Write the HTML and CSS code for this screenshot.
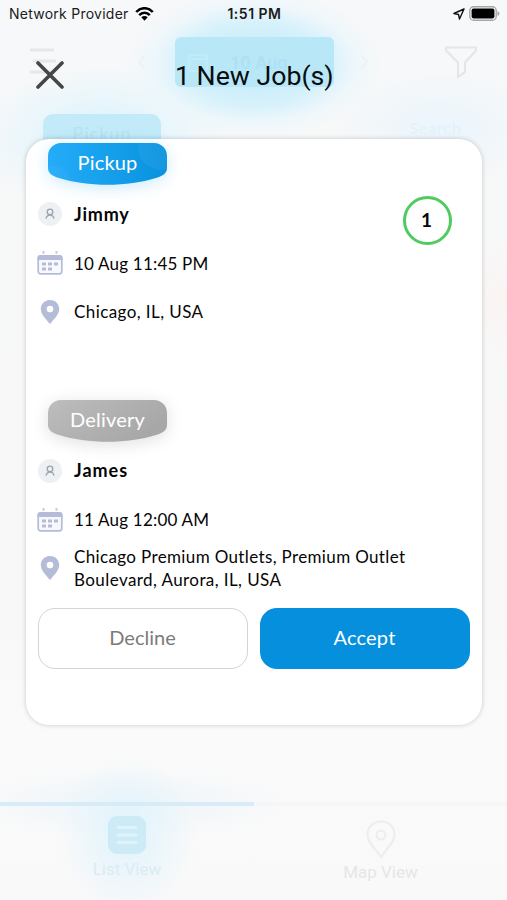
FILE: index.html
```html
<!DOCTYPE html>
<html lang="en">
<head>
<meta charset="utf-8">
<title>New Jobs</title>
<link rel="stylesheet" href="styles.css">
</head>
<body>
<svg class="defs" aria-hidden="true">
  <symbol id="person" viewBox="0 0 24 24"><circle cx="12" cy="12" r="12" fill="#edf1f4" stroke="none"/><circle cx="12" cy="9.900" r="2.800"/><path d="M8 16.700c.5-2.500 2-3.500 4-3.500s3.500 1 4 3.500"/></symbol>
  <symbol id="calendar" viewBox="0 0 26 24"><path d="M6.500 0v2.800M19.500 0v2.800" stroke="#c3cae0" stroke-width="2"/><rect x="1.200" y="5" width="23.600" height="17.800" rx="2.500" fill="#f8f9fc" stroke="#b4bcd8" stroke-width="1.700"/><path d="M.5 9V6.500A2.500 2.500 0 0 1 3 4h20a2.500 2.500 0 0 1 2.500 2.500V9z" fill="#b4bcd8"/><path d="M5 13h4m2 0h4m2 0h4M5 18h4m2 0h4" stroke="#b4bcd8" stroke-width="2.800"/></symbol>
  <symbol id="pin" viewBox="0 0 20 24"><path fill-rule="evenodd" d="M10 0C4.500 0 .8 4 .8 9 .8 14.500 6 19 10 24c4-5 9.200-9.500 9.200-15C19.200 4 15.500 0 10 0zm0 5.800a3.300 3.300 0 1 1 0 6.600 3.300 3.300 0 0 1 0-6.600z" fill="#b4bcd8"/></symbol>
</svg>
<div class="screen">
  <div class="backdrop" aria-hidden="true">
    <div class="back-head">
      <svg class="back-menu" viewBox="0 0 28 28"><path d="M1 2h24M4 13h23M1 24h22"/></svg>
      <svg class="back-arrow" viewBox="0 0 10 16"><path d="M8 1 2 8l6 7"/></svg>
      <div class="back-date"><svg viewBox="0 0 20 20"><rect x="1" y="3" width="18" height="16" rx="3"/><path d="M1 7h18"/></svg><span>10 Aug</span></div>
      <svg class="back-arrow" viewBox="0 0 10 16"><path d="m2 1 6 7-6 7"/></svg>
      <svg class="back-filter" viewBox="0 0 34 34"><path d="M2 2.500h30v3L21 17.500v9.500l-7 5V17.500L2 5.500z"/></svg>
    </div>
    <div class="back-tabs"><div class="back-pickup">Pickup</div><div class="back-search">Search</div></div>
    <div class="back-body"></div>
    <div class="back-nav">
      <div class="nav-item current">
        <svg viewBox="0 0 38 38"><rect width="38" height="38" rx="9" fill="#cdebf7"/><path d="M10 11.500h18M10 19h18M10 26.500h18" stroke="#e0f3fb" stroke-width="3" stroke-linecap="round"/></svg>
        <span>List View</span>
      </div>
      <div class="nav-item">
        <svg viewBox="0 0 38 38"><path d="M19 1.500C11 1.500 5.500 7 5.500 14.500 5.500 23 14 29 19 37c5-8 13.500-14 13.500-22.500C32.500 7 27 1.500 19 1.500z" /><circle cx="19" cy="15" r="4.500"/></svg>
        <span>Map View</span>
      </div>
    </div>
  </div>

  <div class="front">
    <div class="status">
      <div class="carrier"><span>Network Provider</span>
        <svg width="19" height="14" viewBox="0 0 19 14"><path d="M1.200 5C6-.1 13-.1 17.800 5M4.200 8.200c3-3.200 7.600-3.200 10.600 0" fill="none" stroke="#000" stroke-width="2.500"/><path d="m6.300 10.200 3.200 3.500 3.200-3.500c-1.800-1.700-4.600-1.700-6.400 0z"/></svg>
      </div>
      <span class="clock">1:51 PM</span>
      <div class="power">
        <svg width="12" height="12" viewBox="0 0 12 12"><path d="M11 1 .9 5.500l4.600 1L6.500 11z" fill="none" stroke="#111" stroke-width="1.400" stroke-linejoin="round"/></svg>
        <svg width="31" height="15" viewBox="0 0 31 15"><rect x=".8" y=".8" width="26.400" height="13.400" rx="3.800" fill="none" stroke="#a6a6a6" stroke-width="1.400"/><rect x="2.600" y="2.600" width="22.800" height="9.800" rx="1.800"/><path d="M28.500 5v5q2-1 2-2.500t-2-2.500z" fill="#a6a6a6"/></svg>
      </div>
    </div>
    <div class="titlebar">
      <svg class="close" viewBox="0 0 28 28"><path d="m2 2 24 24M26 2 2 26"/></svg>
      <h1>1 New Job(s)</h1>
    </div>
    <main class="card">
      <section class="stop">
        <div class="badge pickup"><svg viewBox="0 0 119 42"><defs><linearGradient id="blue"><stop stop-color="#24acf8"/><stop offset="1" stop-color="#0892de"/></linearGradient><clipPath id="tag"><path d="M13 0h93a13 13 0 0 1 13 13v12c0 5-4 8-11 10C80 44 39 44 11 35 4 33 0 30 0 25V13A13 13 0 0 1 13 0z"/></clipPath></defs><g clip-path="url(#tag)"><path fill="url(#blue)" d="M0 0h119v42H0z"/><circle cx="113" cy="4" r="23" fill="#fff" opacity=".05"/><circle cx="5" cy="41" r="18" fill="#fff" opacity=".04"/></g></svg><span>Pickup</span></div>
        <div class="row"><svg class="ic person"><use href="#person"/></svg><span class="name jimmy">Jimmy</span></div>
        <div class="row"><svg class="ic calendar"><use href="#calendar"/></svg><span class="when">10 Aug 11:45 PM</span></div>
        <div class="row"><svg class="ic pin"><use href="#pin"/></svg><span class="city">Chicago, IL, USA</span></div>
        <div class="count">1</div>
      </section>
      <section class="stop second">
        <div class="badge delivery"><svg viewBox="0 0 119 42"><defs><linearGradient id="grey" y2=".5"><stop stop-color="#bdbdbd"/><stop offset="1" stop-color="#a7a7a7"/></linearGradient></defs><path fill="url(#grey)" d="M13 0h93a13 13 0 0 1 13 13v12c0 5-4 8-11 10C80 44 39 44 11 35 4 33 0 30 0 25V13A13 13 0 0 1 13 0z"/></svg><span>Delivery</span></div>
        <div class="row"><svg class="ic person"><use href="#person"/></svg><span class="name james">James</span></div>
        <div class="row"><svg class="ic calendar"><use href="#calendar"/></svg><span class="when">11 Aug 12:00 AM</span></div>
        <div class="row"><svg class="ic pin"><use href="#pin"/></svg><span class="address">Chicago Premium Outlets, Premium Outlet<br><span class="line2">Boulevard, Aurora, IL, USA</span></span></div>
      </section>
      <div class="actions">
        <button class="btn decline">Decline</button>
        <button class="btn accept">Accept</button>
      </div>
    </main>
  </div>
</div>
</body>
</html>
```

FILE: styles.css
```css
* { box-sizing: border-box; }
body { margin: 0; font-family: Lato, "Liberation Sans", sans-serif; color: #050505; }
.defs { position: absolute; width: 0; height: 0; }
.screen { position: relative; width: 507px; height: 900px; overflow: hidden; background: #f9f9f9; }

.backdrop {
  position: absolute; inset: 0; display: flex; flex-direction: column; padding-top: 37px;
  background:
    radial-gradient(ellipse 130px 75px at 254px 64px, #bfeafa, #d6f1fb 55%, rgba(234,247,252,.6) 80%, rgba(246,250,252,0)),
    radial-gradient(ellipse 125px 75px at 102px 140px, #d6f0fb, #e9f6fb 55%, rgba(246,250,252,0)),
    radial-gradient(ellipse 110px 60px at 440px 128px, #eaf5fc, rgba(246,250,252,0)),
    radial-gradient(ellipse 50px 60px at 507px 300px, #faf4f2, rgba(249,247,247,0)),
    radial-gradient(ellipse 70px 80px at 127px 835px, #e0f3fc, rgba(249,251,252,0)),
    radial-gradient(ellipse 170px 35px at 127px 803px, #edf5fa, rgba(249,251,252,0)),
    linear-gradient(#f7f8f9, #f8f8f8 70%, #fafafa 80%, #f9f9f9);
}
.back-head { display: flex; align-items: center; height: 50px; padding: 0 29px 0 29px; }
.backdrop svg { fill: none; stroke: #e7ebed; stroke-width: 2; flex: none; }
.backdrop .back-menu { width: 28px; height: 28px; stroke: #e4e8ea; stroke-width: 3; margin-right: 80px; }
.backdrop .back-arrow { width: 10px; height: 16px; opacity: .4; }
.backdrop .back-filter { width: 34px; height: 34px; stroke: #e3e5e6; margin-left: auto; }
.back-date { width: 159px; height: 50px; margin: 0 25px 0 28px; border-radius: 6px; background: #b8e7f8; display: flex; align-items: center; padding-left: 13px; gap: 22px; font: 700 18px Roboto, sans-serif; color: #aee1f4; }
.backdrop .back-date svg { width: 20px; height: 20px; stroke: #c2ebfa; }
.back-tabs { display: flex; justify-content: space-between; margin: 27px 45px 0 43px; font-size: 18px; letter-spacing: 1px; }
.back-pickup { width: 118px; height: 42px; border-radius: 10px; background: #c2eaf9; color: #b3e2f4; text-align: center; line-height: 38px; }
.back-search { line-height: 28px; font-size: 16px; color: #e2f1fa; }
.back-body { flex: 1; }
.back-nav { display: grid; grid-template-columns: 254px 253px; height: 98px; }
.nav-item { display: flex; flex-direction: column; align-items: center; padding-top: 14px; border-top: 4px solid #f6f6f6; font: 17px/20px Roboto, sans-serif; color: #e6e6e6; gap: 4px; }
.nav-item svg { width: 38px; height: 38px; stroke: #ededed; }
.nav-item.current { border-color: #d8ecf8; color: #daecf3; padding-top: 10px; gap: 5px; }
.backdrop .nav-item.current svg { stroke: none; }

.front { position: relative; height: 900px; display: flex; flex-direction: column; }
.status { display: grid; grid-template-columns: 1fr auto 1fr; align-items: center; height: 27px; padding: 0 7px 0 9px; font: 500 14px Inter, sans-serif; color: #1b1b1b; }
.carrier { display: flex; align-items: center; gap: 6px; letter-spacing: .25px; font-weight: 400; }
.clock { font-weight: 600; letter-spacing: .5px; }
.power { display: flex; justify-content: flex-end; align-items: center; gap: 4px; }
.titlebar { display: flex; align-items: center; height: 95px; padding-left: 36px; margin-bottom: 17px; }
.close { flex: none; width: 28px; height: 28px; fill: none; stroke: #464646; stroke-width: 3.600; stroke-linecap: round; }
h1 { margin: 2px 0 0 111px; font: 400 26.700px Roboto, sans-serif; color: #080c0e; }

.card { width: 456px; height: 586px; margin-left: 26px; background: #fff; border-radius: 23px; box-shadow: 0 0 5px rgba(0,0,0,.2); padding: 4px 12px 0; }
.stop { position: relative; height: 256.500px; }
.stop.second { height: 208.500px; }
.badge { display: grid; width: 119px; height: 42px; margin-left: 10px; margin-bottom: 5px; }
.badge > * { grid-area: 1 / 1; }
.badge svg { width: 119px; height: 42px; }
.badge span { z-index: 1; text-align: center; line-height: 38px; font-size: 20px; letter-spacing: .2px; color: #fff; }
.pickup svg { filter: drop-shadow(0 3px 8px rgba(20,160,235,.22)); }
.delivery svg { filter: drop-shadow(0 3px 8px rgba(0,0,0,.12)); }
.row { display: grid; grid-template-columns: 24px 1fr; column-gap: 12px; align-items: center; height: 48.700px; font-size: 17px; line-height: 23px; white-space: nowrap; }
.when { letter-spacing: .2px; }
.city, .line2 { letter-spacing: .42px; }
.address { letter-spacing: .36px; }
.ic { justify-self: center; fill: none; stroke: #9aa3b4; stroke-width: 1.300; overflow: visible; }
.ic.calendar, .ic.pin { stroke: none; }
.person { width: 24px; height: 24px; }
.calendar { width: 26px; height: 24px; }
.pin { width: 20px; height: 24px; }
.name { font-weight: 700; font-size: 18px; }
.jimmy { letter-spacing: .8px; }
.james { letter-spacing: 1px; }
.count { position: absolute; top: 53px; left: 365px; width: 49px; height: 49px; border: 3px solid #50cb60; border-radius: 50%; text-align: center; font: 700 19px/42px Lato, sans-serif; padding-right: 2px; }
.actions { display: grid; grid-template-columns: 210px 210px; gap: 12px; }
.btn { height: 61px; padding: 0 1px 3px 0; border-radius: 17px; font: 400 20px Lato, sans-serif; }
.decline { background: #fff; border: 1.500px solid #d4d4d4; color: #7b7b7b; }
.accept { background: #058fdc; border: 0; color: #fff; letter-spacing: .2px; }
```
